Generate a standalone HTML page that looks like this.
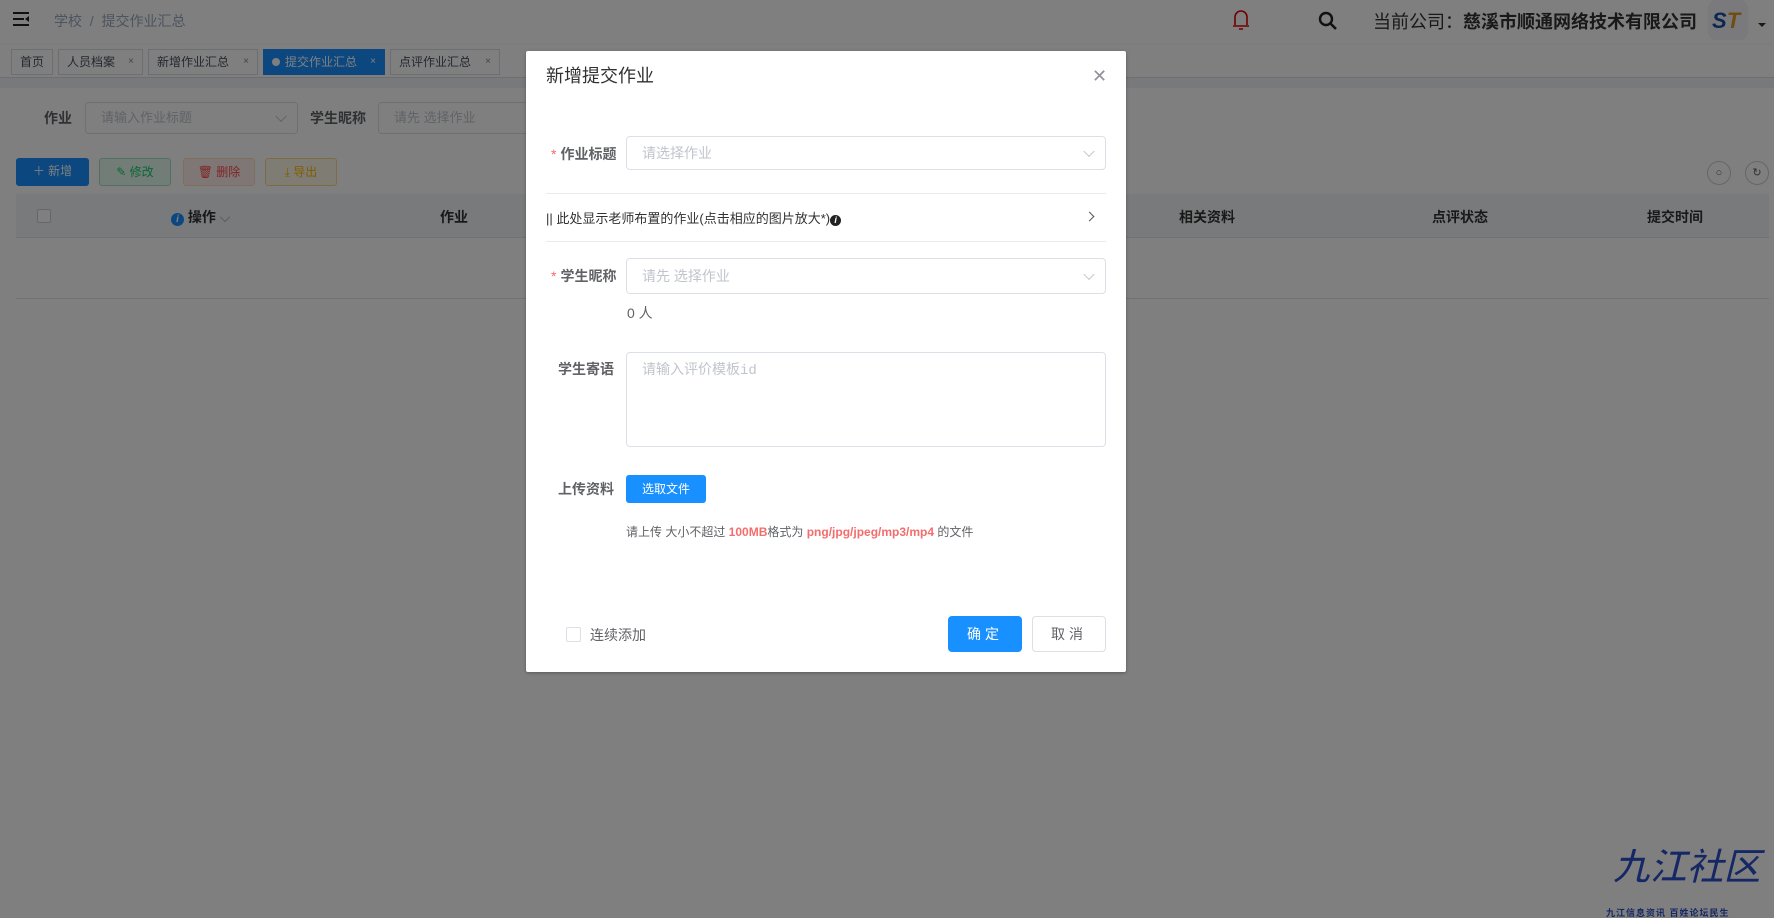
<!DOCTYPE html>
<html><head><meta charset="utf-8"><style>
*{box-sizing:border-box;margin:0;padding:0}
body{width:1774px;height:918px;overflow:hidden;position:relative;background:#fff;font-family:"Liberation Sans","Noto Sans CJK SC",sans-serif;font-size:14px;color:#606266}
.abs{position:absolute}
.hdr{left:0;top:0;width:1774px;height:45px;background:#fff}
.tabs{left:0;top:45px;width:1774px;height:33px;background:#fff;border-bottom:1px solid #d8dce5;box-shadow:0 1px 3px rgba(0,0,0,.12)}
.tab{position:absolute;top:4px;height:26px;border:1px solid #d8dce5;font-size:12px;line-height:24px;padding-left:8px;color:#495060;background:#fff}
.tab .x{position:absolute;right:8px;font-size:10px;color:#888}
.gap{left:0;top:78px;width:1774px;height:10px;background:#f0f2f5}
.lbl{font-weight:bold;color:#606266;font-size:14px}
.inp{border:1px solid #dcdfe6;border-radius:4px;background:#fff;color:#c0c4cc;font-size:14px;padding-left:15px}
.btn{position:absolute;top:158px;height:28px;border-radius:3px;font-size:12px;line-height:26px;text-align:center}
.ov{left:0;top:0;width:1774px;height:918px;background:rgba(0,0,0,.5)}
.modal{left:526px;top:51px;width:600px;height:621px;background:#fff;border-radius:2px;box-shadow:0 1px 3px rgba(0,0,0,.3)}
.m{position:absolute}
.chev{position:absolute;right:12px;top:50%;width:8px;height:8px;border-right:1px solid #c0c4cc;border-bottom:1px solid #c0c4cc;transform:translateY(-70%) rotate(45deg)}
.star{color:#f56c6c;font-weight:normal;margin-right:4px}
</style></head><body>
<div class="abs hdr">
  <div class="abs" style="left:13px;top:12px;width:16px;height:14px">
    <div style="height:2px;background:#222;margin-bottom:4px"></div>
    <div style="height:2px;width:11px;background:#222;margin-bottom:4px"></div>
    <div style="height:2px;background:#222"></div>
    <div style="position:absolute;right:0;top:4px;border-right:4px solid #222;border-top:3px solid transparent;border-bottom:3px solid transparent"></div>
  </div>
  <div class="abs" style="left:54px;top:11px;font-size:14px;color:#97a8be">学校 &nbsp;/&nbsp; 提交作业汇总</div>
  <svg class="abs" style="left:1230px;top:8px" width="22" height="24" viewBox="0 0 22 24"><path d="M5 17V9a6 6 0 0 1 12 0v8M3 18h16M9 21h4" stroke="#d00" stroke-width="1.6" fill="none"/></svg>
  <svg class="abs" style="left:1318px;top:11px" width="20" height="20" viewBox="0 0 20 20"><circle cx="8" cy="8" r="6" stroke="#222" stroke-width="2.4" fill="none"/><path d="M12.5 12.5L18 18" stroke="#222" stroke-width="2.6"/></svg>
  <div class="abs" style="left:1373px;top:8px;font-size:18px;color:#333">当前公司：<b>慈溪市顺通网络技术有限公司</b></div>
  <div class="abs" style="left:1708px;top:0;width:40px;height:40px;background:#f4f5f8;border-radius:8px"></div>
  <div class="abs" style="left:1712px;top:8px;font-size:22px;font-weight:bold;font-style:italic;color:#1a4fa0">S<span style="color:#e09a2a">T</span></div>
  <div class="abs" style="left:1758px;top:23px;border-top:4px solid #333;border-left:4px solid transparent;border-right:4px solid transparent"></div>
</div>
<div class="abs tabs">
  <div class="tab" style="left:11px;width:42px">首页</div>
  <div class="tab" style="left:58px;width:85px">人员档案<span class="x">×</span></div>
  <div class="tab" style="left:148px;width:110px">新增作业汇总<span class="x">×</span></div>
  <div class="tab" style="left:263px;width:122px;background:#1890ff;border-color:#1890ff;color:#fff"><span style="display:inline-block;width:8px;height:8px;border-radius:50%;background:#fff;margin-right:5px"></span>提交作业汇总<span class="x" style="color:#fff">×</span></div>
  <div class="tab" style="left:390px;width:110px">点评作业汇总<span class="x">×</span></div>
</div>
<div class="abs gap"></div>
<div class="abs lbl" style="left:44px;top:108px">作业</div>
<div class="abs inp" style="left:85px;top:102px;width:213px;height:32px;line-height:30px;font-size:13px">请输入作业标题<span class="chev"></span></div>
<div class="abs lbl" style="left:310px;top:108px">学生昵称</div>
<div class="abs inp" style="left:378px;top:102px;width:200px;height:32px;line-height:30px;font-size:13px">请先 选择作业</div>
<div class="btn" style="left:16px;width:73px;background:#1890ff;color:#fff">＋ 新增</div>
<div class="btn" style="left:99px;width:72px;background:#e7faf0;border:1px solid #a3e3c1;color:#13ce66">✎ 修改</div>
<div class="btn" style="left:183px;width:72px;background:#ffeded;border:1px solid #fdb;color:#ff4949">🗑 删除</div>
<div class="btn" style="left:265px;width:72px;background:#fff8e6;border:1px solid #fdd68a;color:#ffba00">⤓ 导出</div>
<div class="abs" style="left:1707px;top:161px;width:24px;height:24px;border:1px solid #ccc;border-radius:50%;font-size:11px;text-align:center;line-height:22px">○</div>
<div class="abs" style="left:1745px;top:161px;width:24px;height:24px;border:1px solid #ccc;border-radius:50%;font-size:11px;text-align:center;line-height:22px">↻</div>
<div class="abs" style="left:16px;top:194px;width:1753px;height:44px;background:#f3f4f6;border-bottom:1px solid #dfe6ec;font-weight:bold;color:#333">
  <div class="abs" style="left:21px;top:15px;width:14px;height:14px;border:1px solid #ccc;border-radius:2px;background:#fff"></div>
  <div class="abs" style="left:155px;top:13px"><span style="display:inline-block;width:13px;height:13px;border-radius:50%;background:#1890ff;color:#fff;font-size:10px;text-align:center;line-height:13px;font-style:italic">i</span> 操作 <span style="font-weight:normal;color:#999">⌵</span></div>
  <div class="abs" style="left:424px;top:13px">作业</div>
  <div class="abs" style="left:1163px;top:13px">相关资料</div>
  <div class="abs" style="left:1416px;top:13px">点评状态</div>
  <div class="abs" style="left:1631px;top:13px">提交时间</div>
</div>
<div class="abs" style="left:16px;top:298px;width:1753px;height:1px;background:#dfe6ec"></div>
<div class="abs" style="left:1612px;top:846px;font-size:38px;font-weight:bold;font-style:italic;color:#2a4fc8;-webkit-text-stroke:1.5px #fff;letter-spacing:-1px;line-height:44px">九江社区</div>
<div class="abs" style="left:1695px;top:887px;font-size:8px;color:#fff;line-height:8px;font-weight:bold">www.nhjjlt.net<br>www.nhjjlt.com</div>
<div class="abs" style="left:1606px;top:906px;font-size:9px;color:#2a4fc8;letter-spacing:1px;font-weight:bold">九江信息资讯 百姓论坛民生</div>
<div class="abs ov"></div>
<div class="abs modal">
  <div class="m" style="left:20px;top:11px;font-size:18px;color:#303133">新增提交作业</div>
  <div class="m" style="left:566px;top:16px;font-size:18px;color:#909399;line-height:18px">✕</div>
  <div class="m lbl" style="left:25px;top:93px"><span class="star">*</span>作业标题</div>
  <div class="m inp" style="left:100px;top:85px;width:480px;height:34px;line-height:32px">请选择作业<span class="chev"></span></div>
  <div class="m" style="left:20px;top:142px;width:560px;height:1px;background:#e8eaec"></div>
  <div class="m" style="left:20px;top:157px;font-size:13px;color:#303133">|| 此处显示老师布置的作业(点击相应的图片放大*)<span style="display:inline-block;width:11px;height:11px;border-radius:50%;background:#222;color:#fff;font-size:9px;text-align:center;line-height:11px;font-style:italic;font-weight:bold">i</span></div>
  <div class="m" style="left:560px;top:162px;width:7px;height:7px;border-right:1px solid #555;border-top:1px solid #555;transform:rotate(45deg)"></div>
  <div class="m" style="left:20px;top:190px;width:560px;height:1px;background:#e8eaec"></div>
  <div class="m lbl" style="left:25px;top:215px"><span class="star">*</span>学生昵称</div>
  <div class="m inp" style="left:100px;top:207px;width:480px;height:36px;line-height:34px">请先 选择作业<span class="chev"></span></div>
  <div class="m" style="left:101px;top:252px;font-size:14px">0 人</div>
  <div class="m lbl" style="left:32px;top:308px">学生寄语</div>
  <div class="m inp" style="left:100px;top:301px;width:480px;height:95px;padding-top:6px">请输入评价模板<span style="font-family:'Liberation Mono',monospace">id</span></div>
  <div class="m lbl" style="left:32px;top:428px">上传资料</div>
  <div class="m" style="left:100px;top:424px;width:80px;height:28px;background:#1890ff;color:#fff;border-radius:3px;font-size:12px;text-align:center;line-height:28px">选取文件</div>
  <div class="m" style="left:100px;top:472px;font-size:12px;color:#606266">请上传 大小不超过 <b style="color:#f56c6c">100MB</b>格式为 <b style="color:#f56c6c">png/jpg/jpeg/mp3/mp4</b> 的文件</div>
  <div class="m" style="left:40px;top:576px;width:15px;height:15px;border:1px solid #dcdfe6;border-radius:2px"></div>
  <div class="m" style="left:64px;top:574px;font-size:14px">连续添加</div>
  <div class="m" style="left:422px;top:565px;width:74px;height:36px;background:#1890ff;border-radius:4px;color:#fff;text-align:center;line-height:36px;letter-spacing:4px">确定</div>
  <div class="m" style="left:506px;top:565px;width:74px;height:36px;border:1px solid #dcdfe6;border-radius:4px;color:#606266;text-align:center;line-height:34px;letter-spacing:4px">取消</div>
</div>
</body></html>
